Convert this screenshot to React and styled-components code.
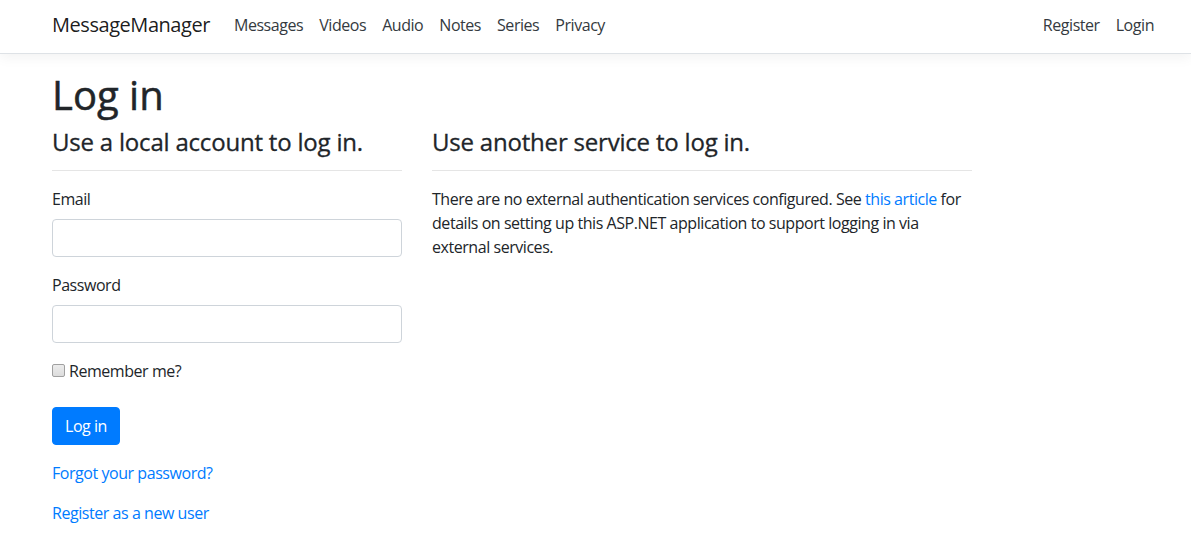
import React from 'react';
import styled, { createGlobalStyle } from 'styled-components';

const FONT = '"Segoe UI", "Open Sans", "Liberation Sans", sans-serif';

const GlobalStyle = createGlobalStyle`
  html, body {
    margin: 0;
    padding: 0;
    background: #fff;
  }
  body {
    font-family: ${FONT};
    font-size: 16px;
    line-height: 1.5;
    letter-spacing: -0.028em;
    color: #212529;
  }
  * { box-sizing: border-box; }
`;

const links = ['Messages', 'Videos', 'Audio', 'Notes', 'Series', 'Privacy'];

const App = () => {
  return (
    <>
      <GlobalStyle />
      <Header>
        <NavContainer>
          <Brand href="#">MessageManager</Brand>
          <NavList>
            { links.map(l => <NavLink key={l} href="#">{l}</NavLink>) }
          </NavList>
          <NavList right>
            <NavLink href="#">Register</NavLink>
            <NavLink href="#">Login</NavLink>
          </NavList>
        </NavContainer>
      </Header>
      <Main>
        <Title>Log in</Title>
        <Row>
          <Column width={380}>
            <SubTitle>Use a local account to log in.</SubTitle>
            <Rule />
            <FormGroup>
              <Label>Email</Label>
              <Input type="email" />
            </FormGroup>
            <FormGroup>
              <Label>Password</Label>
              <Input type="password" />
            </FormGroup>
            <FormGroup>
              <CheckLabel>
                <Check type="checkbox" />
                Remember me?
              </CheckLabel>
            </FormGroup>
            <FormGroup>
              <Button type="button">Log in</Button>
            </FormGroup>
            <Para><Link href="#">Forgot your password?</Link></Para>
            <Para><Link href="#">Register as a new user</Link></Para>
          </Column>
          <Column width={570}>
            <SubTitle>Use another service to log in.</SubTitle>
            <Rule />
            <Para>
              There are no external authentication services configured. See <Link href="#">this article</Link> for details on setting up this ASP.NET application to support logging in via external services.
            </Para>
          </Column>
        </Row>
      </Main>
    </>
  );
};

const Header = styled.header`
  height: 54px;
  border-bottom: 1px solid #dee2e6;
  box-shadow: 0 4px 12px rgba(0, 0, 0, 0.05);
  background: #fff;
  margin-bottom: 15px;
`;

const NavContainer = styled.nav`
  width: 1140px;
  margin-left: 37px;
  padding: 0 15px 4px;
  height: 100%;
  display: flex;
  align-items: center;
`;

const Brand = styled.a`
  font-size: 20px;
  line-height: 30px;
  color: rgba(0, 0, 0, 0.9);
  text-decoration: none;
  margin-right: 16px;
`;

const NavList = styled.div`
  display: flex;
  margin-left: ${ props => props.right ? 'auto' : '0' };
`;

const NavLink = styled.a`
  padding: 8px;
  color: #343a40;
  text-decoration: none;
  font-size: 16px;
`;

const Main = styled.main`
  width: 1140px;
  margin-left: 37px;
  padding: 0 15px 16px;
`;

const Title = styled.h1`
  font-size: 40px;
  font-weight: 500;
  line-height: 1.2;
  letter-spacing: 0;
  -webkit-text-stroke: 0.5px currentColor;
  padding-top: 2px;
  margin: 0 0 6px;
`;

const Row = styled.div`
  display: flex;
  margin: 0 -15px;
`;

const Column = styled.div`
  width: ${ props => props.width }px;
  padding: 0 15px;
`;

const SubTitle = styled.h4`
  font-size: 24px;
  font-weight: 500;
  line-height: 1.2;
  letter-spacing: -0.2px;
  -webkit-text-stroke: 0.3px currentColor;
  padding-top: 3px;
  margin: 0;
`;

const Rule = styled.hr`
  border: 0;
  border-top: 1px solid rgba(0, 0, 0, 0.1);
  margin: 13px 0 16px;
`;

const FormGroup = styled.div`
  margin-bottom: 16px;
`;

const Label = styled.label`
  display: inline-block;
  margin-bottom: 8px;
`;

const Input = styled.input`
  display: block;
  width: 100%;
  height: 38px;
  padding: 6px 12px;
  font-family: ${FONT};
  font-size: 16px;
  color: #495057;
  background: #fff;
  border: 1px solid #ced4da;
  border-radius: 4px;
`;

const CheckLabel = styled.label`
  display: inline-flex;
  align-items: center;
  margin-bottom: 8px;
`;

const Check = styled.input`
  appearance: none;
  width: 13px;
  height: 13px;
  margin: 0 4px 0 0;
  border: 1px solid #a0a0a0;
  border-radius: 2px;
  background: linear-gradient(#ececec, #dcdcdc);
`;

const Button = styled.button`
  display: inline-block;
  height: 38px;
  padding: 6px 12px;
  font-family: ${FONT};
  font-size: 16px;
  line-height: 1.5;
  letter-spacing: -0.028em;
  color: #fff;
  background: #007bff;
  border: 1px solid #007bff;
  border-radius: 4px;
`;

const Para = styled.p`
  margin: 0 0 16px;
`;

const Link = styled.a`
  color: #007bff;
  text-decoration: none;
`;

export default App;
